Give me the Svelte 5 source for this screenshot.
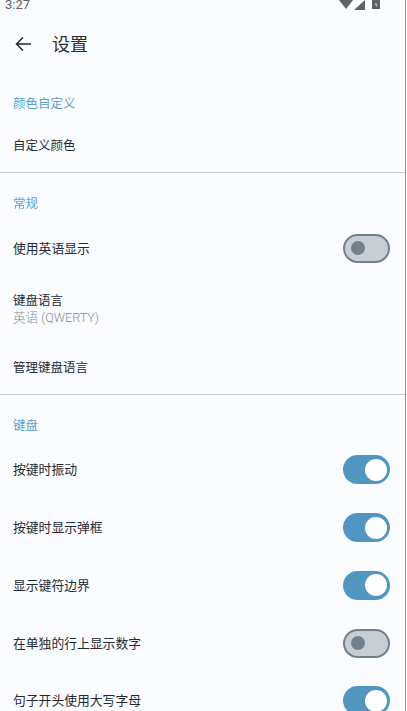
<script lang="ts">
	type Row = { label: string; sub?: string; toggle?: boolean; h: number };
	type Section = { title: string; rows: Row[]; divider?: boolean };

	const sections: Section[] = [
		{
			title: '颜色自定义',
			divider: true,
			rows: [{ label: '自定义颜色', h: 53 }]
		},
		{
			title: '常规',
			divider: true,
			rows: [
				{ label: '使用英语显示', toggle: false, h: 58 },
				{ label: '键盘语言', sub: '英语 (QWERTY)', h: 63 },
				{ label: '管理键盘语言', h: 54 }
			]
		},
		{
			title: '键盘',
			rows: [
				{ label: '按键时振动', toggle: true, h: 57.75 },
				{ label: '按键时显示弹框', toggle: true, h: 57.75 },
				{ label: '显示键符边界', toggle: true, h: 57.75 },
				{ label: '在单独的行上显示数字', toggle: false, h: 57.75 },
				{ label: '句子开头使用大写字母', toggle: true, h: 57.75 }
			]
		}
	];
</script>

<div class="screen">
	<div class="status">
		<span class="time">3:27</span>
		<div class="status-icons">
			<svg width="14" height="10" viewBox="0 0 14 10"><path d="M0 0H14L7 9Z" fill="#5f6368" /></svg>
			<svg width="12" height="10" viewBox="0 0 12 10"><path d="M11 0V10H0Z" fill="#5f6368" /></svg>
			<svg class="battery" width="8" height="10" viewBox="0 0 8 10"><path d="M0 0H8V9H0Z" fill="#5f6368" /><path d="M4.2 2.5 3 5H4V7L5.1 4.4H4.1Z" fill="#fff" /></svg>
		</div>
	</div>

	<header>
		<svg width="24" height="24" viewBox="0 0 24 24" fill="none">
			<path d="M19 12H5M11 5.5 4.5 12l6.5 6.5" stroke="#23282c" stroke-width="1.5" />
		</svg>
		<h1>设置</h1>
	</header>

	{#each sections as section}
		<section class:divider={section.divider}>
			<h2>{section.title}</h2>
			{#each section.rows as row}
				<div class="row" style="height: {row.h}px">
					<div class="text">
						<div class="label" class:plain={row.toggle === undefined}>{row.label}</div>
						{#if row.sub}
							<div class="sub">{row.sub}</div>
						{/if}
					</div>
					{#if row.toggle !== undefined}
						<div class="switch" class:on={row.toggle}><span class="thumb"></span></div>
					{/if}
				</div>
			{/each}
		</section>
	{/each}
</div>

<style>
	:global(body) {
		margin: 0;
		background: #fff;
		overflow: hidden;
	}

	.screen {
		width: 405px;
		height: 711px;
		overflow: hidden;
		background: #fbfcff;
		border-right: 1px solid #8f9498;
		font-family: Roboto, "Noto Sans CJK SC", sans-serif;
		color: #1f2a33;
	}

	.status {
		height: 10px;
		display: flex;
		justify-content: space-between;
		align-items: flex-start;
		padding: 0 25px 0 5px;
		overflow: hidden;
	}

	.time {
		font-size: 13px;
		line-height: 16px;
		color: #5f6368;
		margin-top: -3px;
	}

	.status-icons {
		display: flex;
		align-items: flex-start;
		gap: 1px;
	}

	.battery {
		margin-left: 5px;
	}

	header {
		height: 68px;
		display: flex;
		align-items: center;
		gap: 16px;
		padding-left: 12px;
	}

	h1 {
		margin: 0 0 2px;
		font-size: 18px;
		font-weight: 400;
		color: #2a2f33;
	}

	section {
		padding-top: 21px;
	}

	section:first-of-type {
		padding-top: 16px;
	}

	section.divider {
		border-bottom: 1px solid #c9ced3;
	}

	h2 {
		margin: 0 0 5px;
		height: 20px;
		padding-left: 13px;
		font-size: 12.5px;
		line-height: 20px;
		font-weight: 400;
		color: #5aa0c8;
	}

	.row {
		display: flex;
		align-items: center;
		justify-content: space-between;
		padding: 0 15px 0 13px;
	}

	.label {
		font-size: 12.8px;
		line-height: 17px;
	}

	.label.plain {
		font-size: 12.5px;
	}

	.sub {
		font-size: 12.6px;
		line-height: 17px;
		font-weight: 300;
		color: #848d95;
	}

	.switch {
		box-sizing: border-box;
		width: 47px;
		height: 29px;
		border-radius: 15px;
		border: 2px solid #72808a;
		background: #c6ced4;
		display: flex;
		align-items: center;
		padding-left: 6px;
	}

	.thumb {
		width: 14px;
		height: 14px;
		border-radius: 50%;
		background: #72808a;
	}

	.switch.on {
		border-color: #4f97c1;
		background: #4f97c1;
		justify-content: flex-end;
		padding: 0 1px 0 0;
	}

	.switch.on .thumb {
		width: 22px;
		height: 22px;
		background: #fff;
	}
</style>
